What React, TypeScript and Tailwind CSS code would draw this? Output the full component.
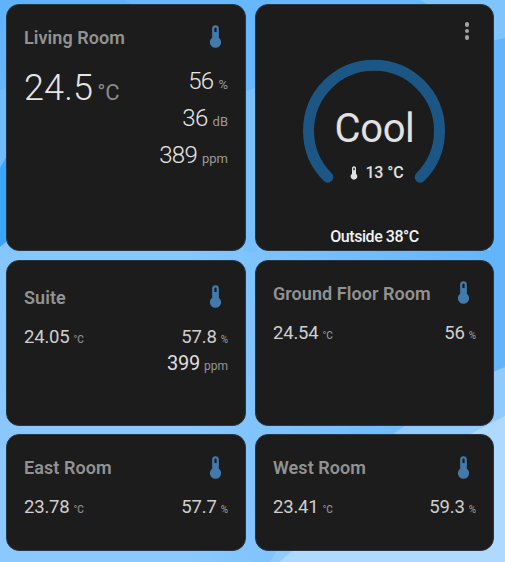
import type { ReactNode } from "react";

function Thermometer({ className }: { className: string }) {
  return (
    <svg viewBox="0 0 24 24" fill="currentColor" className={className}>
      <path d="M15 13V5A3 3 0 0 0 9 5V13A5 5 0 1 0 15 13M12 4A1 1 0 0 1 13 5V8H11V5A1 1 0 0 1 12 4Z" />
    </svg>
  );
}

function Wallpaper() {
  return (
    <svg viewBox="0 0 505 562" className="absolute inset-0 -z-10 h-full w-full">
      <defs>
        <linearGradient id="sky" x1="0" y1="0" x2="0" y2="1">
          <stop offset="0" stopColor="#5fb3fb" />
          <stop offset="0.25" stopColor="#6ab8fc" />
          <stop offset="0.45" stopColor="#86c6fe" />
          <stop offset="1" stopColor="#8bc8fe" />
        </linearGradient>
        <linearGradient id="east" x1="0" y1="0" x2="1" y2="0">
          <stop offset="0" stopColor="#62b5fc" stopOpacity="0" />
          <stop offset="1" stopColor="#62b5fc" />
        </linearGradient>
      </defs>
      <rect width="505" height="562" fill="url(#sky)" />
      <path d="M0 90L6 88V158L0 168Z" fill="#70bbfd" />
      <path d="M0 168L8 154V240L0 247Z" fill="#3da4fc" />
      <path d="M125 0H505V40L250 91Z" fill="#66b7fd" />
      <path d="M420 0H505V38L490 41Z" fill="#80c4fe" />
      <path d="M244 92L258 87V251H244Z" fill="#79c0fe" />
      <rect x="190" y="250" width="315" height="312" fill="url(#east)" />
      <path d="M490 42L505 38V369L490 373Z" fill="#62b4fb" />
      <path d="M385 440C420 415 460 385 505 367V562H270C300 510 345 470 385 440Z" fill="#91cbfe" />
      <path d="M460 440Q482 427 505 416V562H280Q290 550 305 546Z" fill="#b0d9ff" />
    </svg>
  );
}

function Card({ className, children }: { className: string; children: ReactNode }) {
  return (
    <section className={`overflow-hidden rounded-[13px] border border-[#293640] bg-[#1c1c1c] ${className}`}>
      {children}
    </section>
  );
}

function Heading({ children }: { children: ReactNode }) {
  return (
    <header className="flex h-[26px] items-center justify-between">
      <h2 className="whitespace-nowrap pt-0.5 text-[18px] font-semibold leading-6 tracking-[0.06px] text-[#929292]">{children}</h2>
      <Thermometer className="-mr-[0.5px] h-[27px] w-[27px] text-[#4479ac]" />
    </header>
  );
}

interface ReadingProps {
  value: string;
  unit: string;
  valueClass: string;
  unitClass: string;
}

function Reading({ value, unit, valueClass, unitClass }: ReadingProps) {
  return (
    <div className="flex items-baseline whitespace-nowrap">
      <span className={valueClass}>{value}</span>
      <span className={unitClass}>{unit}</span>
    </div>
  );
}

const large = "text-2xl font-light leading-[37px] tracking-[-0.7px] text-[#e6e6e6]";
const largeUnit = "ml-[5px] text-[13px] text-[#9a9a9a]";
const small = "text-[18.5px] font-normal leading-[26px] tracking-[-0.2px] text-[#cfcfcf]";
const smallUnit = "ml-1 text-[10px] font-medium text-[#8c8c8c]";

interface RoomProps {
  name: string;
  temperature: string;
  humidity: string;
  co2?: string;
  className: string;
}

function Room({ name, temperature, humidity, co2, className }: RoomProps) {
  return (
    <Card className={className}>
      <Heading>{name}</Heading>
      <div className="mt-[14px] flex items-start justify-between">
        <Reading value={temperature} unit="°C" valueClass={small} unitClass={smallUnit} />
        <div className="flex flex-col items-end">
          <Reading value={humidity} unit="%" valueClass={small} unitClass={smallUnit} />
          {co2 && (
            <Reading
              value={co2}
              unit="ppm"
              valueClass="text-[20px] font-normal leading-[26px] tracking-[-0.2px] text-[#dedede]"
              unitClass="ml-1 text-xs text-[#969696]"
            />
          )}
        </div>
      </div>
    </Card>
  );
}

function Climate() {
  return (
    <Card className="relative flex flex-col items-center pt-[54px]">
      <button aria-label="More options" className="absolute right-[23.5px] top-[15px] flex h-[22px] w-[5px] flex-col items-center justify-center gap-[2.4px]">
        <span className="h-[4.2px] w-[4.2px] rounded-full bg-[#a3a3a3]" />
        <span className="h-[4.2px] w-[4.2px] rounded-full bg-[#a3a3a3]" />
        <span className="h-[4.2px] w-[4.2px] rounded-full bg-[#a3a3a3]" />
      </button>
      <div className="relative flex h-[143px] w-[143px] shrink-0 flex-col items-center">
        <svg viewBox="0 0 143 143" className="absolute inset-0 h-full w-full">
          <path d="M24.8 118.2A65.5 65.5 0 1 1 117.2 118.2" fill="none" stroke="#1c5684" strokeWidth="11" strokeLinecap="round" />
        </svg>
        <span className="relative mt-[46px] text-[40px] leading-[48px] tracking-[-0.4px] text-[#e1e1e1]">Cool</span>
        <span className="relative mt-[10px] flex items-center whitespace-nowrap pl-[1px] text-base font-medium leading-5 tracking-[-0.1px] text-[#e1e1e1]">
          <Thermometer className="mr-[3px] h-4 w-4" />
          13 °C
        </span>
      </div>
      <p className="mt-[25px] text-base font-medium leading-5 tracking-[-0.45px] text-[#f2f2f2]">Outside 38°C</p>
    </Card>
  );
}

export default function App() {
  return (
    <main className="relative isolate h-[562px] w-[505px] overflow-hidden font-[Roboto,sans-serif]">
      <Wallpaper />
      <div className="grid grid-cols-[240px_239px] grid-rows-[247px_166px_116.5px] gap-x-[9px] gap-y-[8.5px] pl-1.5 pt-1">
        <Card className="px-[17px] pt-[18.5px]">
          <Heading>Living Room</Heading>
          <div className="mt-[13.5px] flex items-start justify-between">
            <Reading
              value="24.5"
              unit="°C"
              valueClass="text-4xl font-light leading-[50px] tracking-[0.15px] text-[#e6e6e6]"
              unitClass="ml-1 text-[22px] text-[#8a8a8a]"
            />
            <div className="flex flex-col items-end">
              <Reading value="56" unit="%" valueClass={large} unitClass={largeUnit} />
              <Reading value="36" unit="dB" valueClass={large} unitClass={largeUnit} />
              <Reading value="389" unit="ppm" valueClass={large} unitClass={largeUnit} />
            </div>
          </div>
        </Card>
        <Climate />
        <Room className="px-[17px] pt-[23px]" name="Suite" temperature="24.05" humidity="57.8" co2="399" />
        <Room className="px-[17px] pt-[19px]" name="Ground Floor Room" temperature="24.54" humidity="56" />
        <Room className="px-[17px] pt-[19px]" name="East Room" temperature="23.78" humidity="57.7" />
        <Room className="px-[17px] pt-[19px]" name="West Room" temperature="23.41" humidity="59.3" />
      </div>
    </main>
  );
}
